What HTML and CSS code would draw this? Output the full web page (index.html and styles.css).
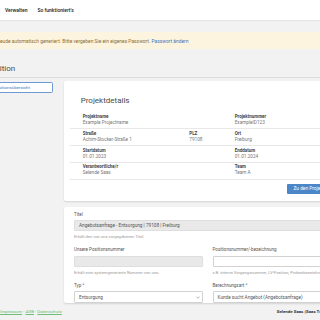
FILE: index.html
```html
<!DOCTYPE HTML><html>
<head>
  <title>Position</title>
  <meta name="viewport" content="width=device-width, initial-scale=1">
  <meta charset="UTF-8">
  <link rel="stylesheet" href="styles.css">
</head>
<body>
  <nav class="nav">
    <a class="nav-link" href="#">Verwalten</a>
    <a class="nav-link" href="#">So funktioniert's</a>
  </nav>

  <div class="alert">eude automatisch generiert. Bitte vergeben Sie ein eigenes Passwort.&nbsp;<a href="#">Passwort ändern</a></div>

  <div class="page">
    <h2 class="page-title">Position</h2>

    <div class="layout">
      <div class="sidebar">
        <a class="side-btn" href="#">Positionsübersicht</a>
      </div>

      <div class="main">
        <div class="card card-details">
          <h3 class="card-title">Projektdetails</h3>

          <div class="detail-row">
            <div><b>Projektname</b><span>Example Projectname</span></div>
            <div></div>
            <div><b>Projektnummer</b><span>ExampleID123</span></div>
          </div>
          <div class="detail-row">
            <div><b>Straße</b><span>Achim-Stocker-Straße 1</span></div>
            <div><b>PLZ</b><span>79108</span></div>
            <div><b>Ort</b><span>Freiburg</span></div>
          </div>
          <div class="detail-row">
            <div><b>Startdatum</b><span>01.01.2023</span></div>
            <div></div>
            <div><b>Enddatum</b><span>01.01.2024</span></div>
          </div>
          <div class="detail-row">
            <div><b>Verantwortliche/r</b><span>Selende Saas</span></div>
            <div></div>
            <div><b>Team</b><span>Team A</span></div>
          </div>

          <div class="card-actions">
            <a class="btn-blue" href="#">Zu den Projektdetails</a>
          </div>
        </div>

        <form class="card card-form">
          <div class="field">
            <label>Titel</label>
            <div class="input input-disabled">Angebotsanfrage - Entsorgung | 79108 | Freiburg</div>
            <small>Erhält den von uns vorgegebenen Titel.</small>
          </div>

          <div class="field-row">
            <div class="field">
              <label>Unsere Positionsnummer</label>
              <div class="input input-disabled"></div>
              <small>Erhält eine systemgenerierte Nummer von uns.</small>
            </div>
            <div class="field">
              <label>Positionsnummer/-bezeichnung</label>
              <div class="input"></div>
              <small>z.B. interne Vorgangsnummer, LV-Position, Probenbezeichnung</small>
            </div>
          </div>

          <div class="field-row">
            <div class="field">
              <label>Typ <i>*</i></label>
              <div class="input select">Entsorgung
                <svg width="4" height="3" viewBox="0 0 4 3"><path d="M0.5 0.8 L2 2.2 L3.5 0.8" fill="none" stroke="#777" stroke-width="0.6"/></svg>
              </div>
            </div>
            <div class="field">
              <label>Berechnungsart <i>*</i></label>
              <div class="input select">Kunde sucht Angebot (Angebotsanfrage)</div>
            </div>
          </div>
        </form>
      </div>
    </div>
  </div>

  <footer class="footer">
    <div class="footer-links"><a href="#">Impressum</a> · <a href="#">AGB</a> · <a href="#">Datenschutz</a></div>
    <div class="footer-user">Selende Saas (Saas Test GmbH)</div>
  </footer>
</body>
</html>
```

FILE: styles.css
```css
html, body {margin: 0; padding: 0;}
body {
  width: 320px;
  height: 320px;
  overflow: hidden;
  background: #f2f2f2;
  font-family: Roboto, "Liberation Sans", sans-serif;
  color: #333;
}
a {text-decoration: none;}

.nav {
  height: 20px;
  background: #fff;
  border-bottom: 1px solid #e4e4e4;
  display: flex;
  align-items: center;
  gap: 10px;
  padding-left: 5px;
}
.nav-link {
  font-size: 5px;
  font-weight: 500;
  color: #222;
}

.alert {
  margin-top: 11px;
  height: 17px;
  background: #fcf4de;
  color: #8a6d3b;
  font-size: 4.9px;
  display: flex;
  align-items: center;
  white-space: nowrap;
}
.alert a {color: #3b78c0;}

.page {
  margin-left: -14px;
  width: 380px;
}
.page-title {
  margin: 15px 0 0;
  font-size: 8px;
  line-height: 10px;
  font-weight: 400;
  color: #4a4a4a;
  padding-bottom: 3px;
  border-bottom: 1px solid #dcdcdc;
}

.layout {
  display: flex;
  margin-top: 3px;
}
.sidebar {
  width: 63px;
  margin-left: 4px;
  margin-right: 11px;
  padding-top: 1px;
}
.side-btn {
  display: flex;
  align-items: center;
  height: 11px;
  box-sizing: border-box;
  border: 1px solid #6d9ad3;
  border-radius: 1.5px;
  background: #fff;
  color: #3d79c2;
  font-size: 4.4px;
  padding-left: 2.5px;
}

.main {
  width: 287px;
  display: flex;
  flex-direction: column;
  gap: 6.7px;
}
.card {
  background: #fff;
  border-radius: 2px;
  box-shadow: 0 1px 2px rgba(0, 0, 0, 0.13);
  margin: 0;
}

.card-details {padding: 14.7px 6px 6.3px;}
.card-title {
  margin: 0 0 7.1px;
  padding-left: 10.7px;
  font-size: 8px;
  line-height: 10px;
  font-weight: 400;
  color: #4a4a4a;
}
.detail-row {
  display: grid;
  grid-template-columns: 106.6px 45.4px 1fr;
  padding: 1.6px 0 2.1px 12.7px;
  border-bottom: 1px solid #e8e8e8;
}
.detail-row b {
  display: block;
  font-size: 4.5px;
  line-height: 6px;
  font-weight: 700;
  color: #444;
}
.detail-row span {
  display: block;
  font-size: 4.7px;
  line-height: 6px;
  color: #777;
}
.card-actions {
  display: flex;
  justify-content: flex-end;
  margin-top: 4px;
}
.btn-blue {
  height: 10.7px;
  display: flex;
  align-items: center;
  padding: 0 6.5px;
  background: #4a86c8;
  border-radius: 1px;
  color: #fff;
  font-size: 4.8px;
  white-space: nowrap;
}

.card-form {padding: 4.3px 10px 0.5px;}
.field-row {
  display: grid;
  grid-template-columns: 1fr 1fr;
  gap: 10px;
}
.field {margin-bottom: 8px;}
.field label {
  display: block;
  font-size: 4.5px;
  line-height: 6px;
  color: #555;
  margin-bottom: 2.2px;
}
.field label i {font-style: normal; color: #3d79c2;}
.input {
  height: 11.5px;
  box-sizing: border-box;
  border: 0.6px solid #d2d2d2;
  border-radius: 1px;
  background: #fff;
  font-size: 4.7px;
  color: #555;
  padding-left: 4px;
  display: flex;
  align-items: center;
  white-space: nowrap;
  overflow: hidden;
}
.input-disabled {background: #e9e9e9; border-color: #dedede;}
.select {justify-content: space-between; padding-right: 2px;}
.field small {
  display: block;
  margin-top: 3.2px;
  font-size: 4.1px;
  line-height: 5px;
  color: #999;
  white-space: nowrap;
}
.field-row + .field-row .field {margin-bottom: 0;}

.footer {
  margin-top: 6px;
  display: grid;
  grid-template-columns: 276.7px auto;
  width: 400px;
  font-size: 4.4px;
  line-height: 6px;
  white-space: nowrap;
}
.footer-links {color: #7a7a7a;}
.footer-links a {color: #6cbf74; text-decoration: underline;}
.footer-user {font-weight: 700; color: #333;}
```
